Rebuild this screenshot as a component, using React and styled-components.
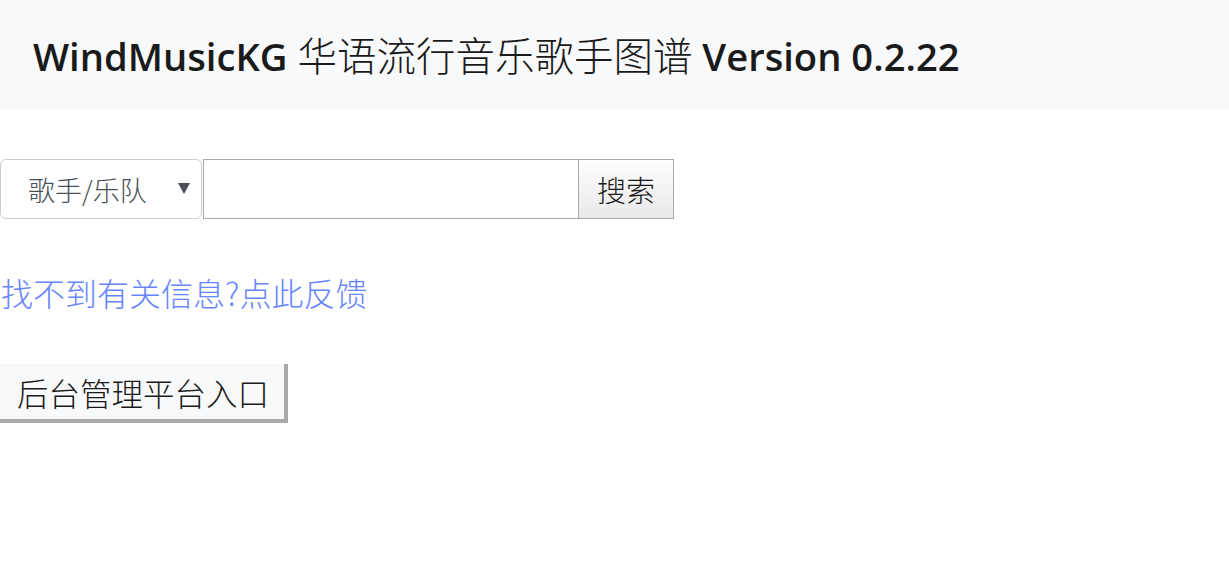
import React from "react";
import styled, { createGlobalStyle } from "styled-components";

const Global = createGlobalStyle`
  html, body { margin: 0; padding: 0; background: #fff; }
  body { font-family: "Open Sans", "Noto Sans CJK SC", sans-serif; color: #212529; }
`;

const Header = styled.header`
  background: #f8f9fa;
  height: 109px;
  display: flex;
  align-items: center;
  padding: 0 33px;
  box-sizing: border-box;
`;

const Title = styled.h1`
  margin: 0;
  font-size: 38.2px;
  line-height: 1.2;
  font-weight: 600;
  color: #1a1a1a;
  white-space: nowrap;
  font-family: "Open Sans", "Noto Sans CJK SC", sans-serif;
`;

const Cjk = styled.span`
  font-family: "Noto Sans CJK SC", sans-serif;
  font-weight: 300;
  font-size: 39.5px;
`;

const Main = styled.main`
  display: flex;
  flex-direction: column;
  align-items: flex-start;
`;

const SearchRow = styled.form`
  display: flex;
  margin-top: 50px;
  height: 60px;
`;

const SelectWrap = styled.div`
  position: relative;
  width: 202px;
  height: 60px;
`;

const Select = styled.select`
  appearance: none;
  width: 100%;
  height: 100%;
  box-sizing: border-box;
  border: 1px solid #c9cdd3;
  border-radius: 6px;
  background: #fff;
  padding: 0 0 0 27px;
  font-family: "Noto Sans CJK SC", sans-serif;
  font-weight: 300;
  font-size: 27px;
  color: #495057;
  outline: none;
`;

const Arrow = styled.span`
  position: absolute;
  right: 12px;
  top: 50%;
  transform: translateY(-55%);
  width: 0;
  height: 0;
  border-left: 6px solid transparent;
  border-right: 6px solid transparent;
  border-top: 11px solid #4a4f55;
  pointer-events: none;
`;

const TextInput = styled.input`
  width: 376px;
  height: 60px;
  box-sizing: border-box;
  border: 1px solid #a9a9a9;
  margin: 0 0 0 1px;
  padding: 0 6px;
  font-size: 24px;
  outline: none;
`;

const SearchButton = styled.button`
  width: 96px;
  height: 60px;
  box-sizing: border-box;
  margin-left: -1px;
  border: 1px solid #a9a9a9;
  background: linear-gradient(#fdfdfd, #e9e9e9);
  font-family: "Noto Sans CJK SC", sans-serif;
  font-weight: 300;
  font-size: 29px;
  color: #1a1a1a;
  padding: 0;
`;

const FeedbackLink = styled.a`
  margin-top: 51px;
  margin-left: 1px;
  font-family: "Noto Sans CJK SC", sans-serif;
  font-weight: 300;
  font-size: 32px;
  line-height: 45px;
  color: #6685ff;
  text-decoration: none;
`;

const AdminButton = styled.button`
  margin-top: 49px;
  width: 288px;
  height: 59px;
  box-sizing: border-box;
  border-style: solid;
  border-width: 0 4px 4px 0;
  border-color: #a9a9a9;
  background: #f8f9fa;
  font-family: "Noto Sans CJK SC", sans-serif;
  font-weight: 300;
  font-size: 31.5px;
  color: #1a1a1a;
  padding: 0 0 0 2px;
`;

export default function App() {
  return (
    <>
      <Global />
      <Header>
        <Title>
          WindMusicKG <Cjk>华语流行音乐歌手图谱</Cjk> Version 0.2.22
        </Title>
      </Header>
      <Main>
        <SearchRow onSubmit={(e) => e.preventDefault()}>
          <SelectWrap>
            <Select defaultValue="artist">
              <option value="artist">歌手/乐队</option>
              <option value="song">歌曲</option>
              <option value="album">专辑</option>
            </Select>
            <Arrow />
          </SelectWrap>
          <TextInput type="text" />
          <SearchButton type="submit">搜索</SearchButton>
        </SearchRow>
        <FeedbackLink href="#">找不到有关信息?点此反馈</FeedbackLink>
        <AdminButton type="button">后台管理平台入口</AdminButton>
      </Main>
    </>
  );
}
